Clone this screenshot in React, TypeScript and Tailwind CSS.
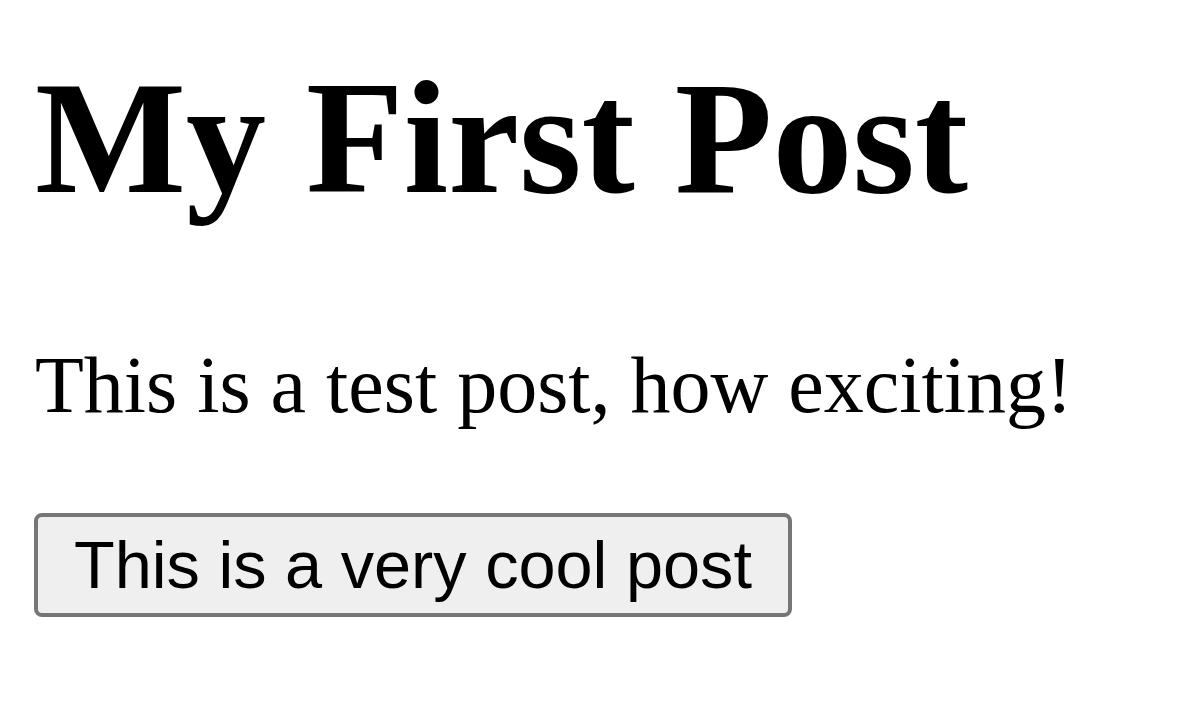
export default function App() {
  return (
    <div className="min-h-[702px] bg-white text-black pl-[35px] pt-[58px] font-['Liberation_Serif',serif]">
      <h1 className="text-[160px] font-bold leading-none m-0 whitespace-nowrap">My First Post</h1>
      <p className="text-[80px] leading-none mt-[127px] whitespace-nowrap">This is a test post, how exciting!</p>
      <div className="mt-[88px] -ml-px">
        <button className="box-border border-4 border-[#767676] bg-[#efefef] rounded-[8px] pl-[36px] pr-[36px] pt-[10px] pb-[10px] text-[66.67px] leading-[76px] font-['Liberation_Sans',Arial,sans-serif] text-black whitespace-nowrap">
          This is a very cool post
        </button>
      </div>
    </div>
  );
}
